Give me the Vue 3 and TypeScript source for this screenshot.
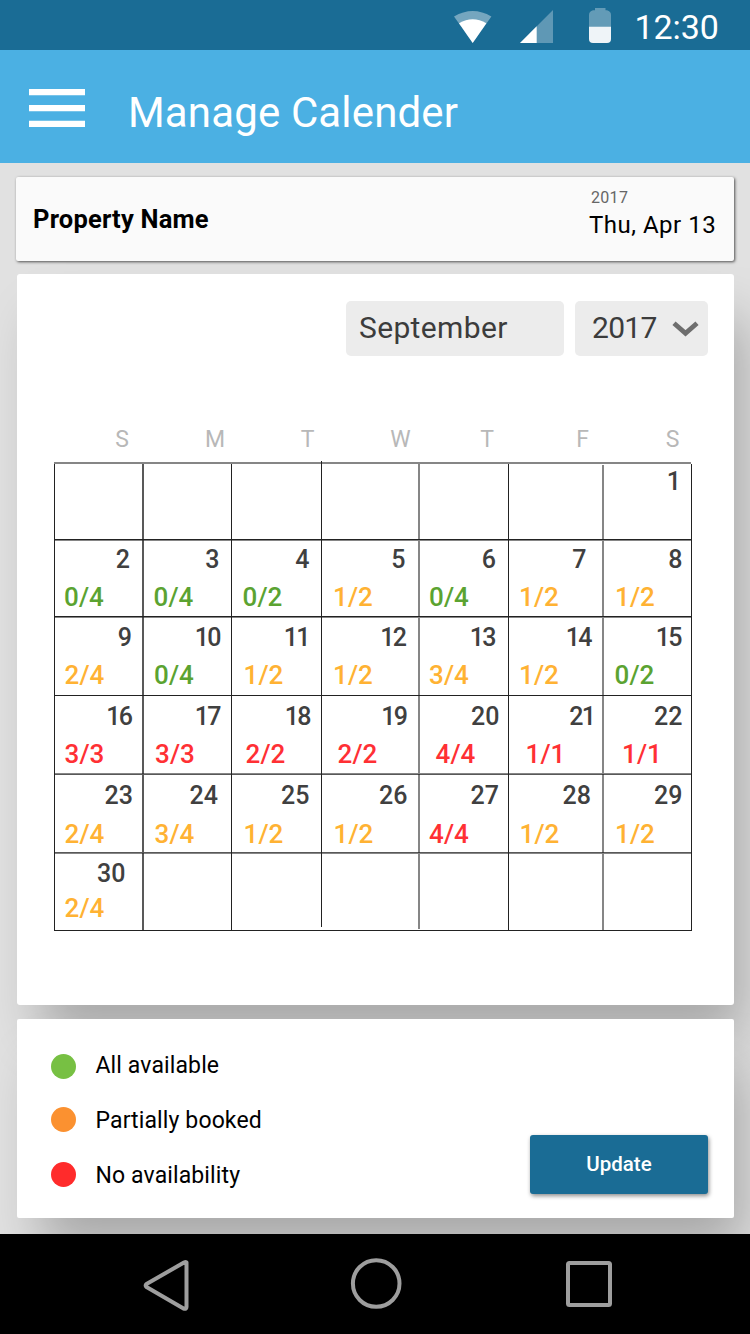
<script setup lang="ts">
type Status = 'free' | 'partial' | 'full'

interface Day {
  day: number
  // distance of the number from the right side of its cell
  inset: number
  booked?: string
  status?: Status
  // distance of the count from the left side of its cell
  lead?: number
}

type Week = { key: string; days: (Day | null)[] }

const d = (day: number, inset: number, booked?: string, status?: Status, lead?: number): Day => ({
  day, inset, booked, status, lead,
})

// a "1" is drawn closer to its neighbour than other digits
const hasOne = (day: number): boolean => day > 9 && String(day).includes('1')

const weekdays: string[] = ['S', 'M', 'T', 'W', 'T', 'F', 'S']

const weeks: Week[] = [
  { key: 'w0', days: [null, null, null, null, null, null, d(1, 10)] },
  { key: 'w1', days: [
    d(2, 13, '0/4', 'free', 10), d(3, 11.5, '0/4', 'free', 10.5), d(4, 11.5, '0/2', 'free', 11.5),
    d(5, 12.5, '1/2', 'partial', 12), d(6, 12, '0/4', 'free', 11), d(7, 16.5, '1/2', 'partial', 11), d(8, 8.5, '1/2', 'partial', 12),
  ] },
  { key: 'w2', days: [
    d(9, 11, '2/4', 'partial', 10.5), d(10, 9.5, '0/4', 'free', 11), d(11, 10.5, '1/2', 'partial', 12.5),
    d(12, 11, '1/2', 'partial', 12), d(13, 11.5, '3/4', 'partial', 11), d(14, 10.5, '1/2', 'partial', 11), d(15, 8.5, '0/2', 'free', 11.5),
  ] },
  { key: 'w3', days: [
    d(16, 10, '3/3', 'full', 10.5), d(17, 9.5, '3/3', 'full', 12), d(18, 9.5, '2/2', 'full', 14.5),
    d(19, 10, '2/2', 'full', 16.5), d(20, 8.5, '4/4', 'full', 17.5), d(21, 7, '1/1', 'full', 17.5), d(22, 8.5, '1/1', 'full', 19),
  ] },
  { key: 'w4', days: [
    d(23, 10, '2/4', 'partial', 10.5), d(24, 13, '3/4', 'partial', 11.5), d(25, 11.5, '1/2', 'partial', 12.5),
    d(26, 10.5, '1/2', 'partial', 12.5), d(27, 9, '4/4', 'full', 11), d(28, 12, '1/2', 'partial', 11.5), d(29, 8.5, '1/2', 'partial', 12),
  ] },
  { key: 'w5', days: [d(30, 17.5, '2/4', 'partial', 10.5), null, null, null, null, null, null] },
]

const legend: { status: Status; label: string }[] = [
  { status: 'free', label: 'All available' },
  { status: 'partial', label: 'Partially booked' },
  { status: 'full', label: 'No availability' },
]
</script>

<template>
  <div class="screen">
    <div class="statusbar">
      <svg class="indicators" width="160" height="50" viewBox="0 0 160 50">
        <path d="M4 16.500 Q22.700 5.500 41.400 16.500 L22.700 42.700Z" fill="#fff" opacity=".4" />
        <path d="M9 23.300 Q22.700 15 36.400 23.300 L22.700 42.900Z" fill="#fff" />
        <path d="M103 10V43H70Z" fill="#fff" opacity=".3" />
        <path d="M86.700 26.300V43H70Z" fill="#fff" />
        <path d="M145 8H155.500V10.300H157Q161 11.500 161 15V27H139V15Q139 11.500 143 10.300H145Z" fill="#fff" opacity=".32" />
        <path d="M139 26.700H161V39Q161 43 157 43H143Q139 43 139 39Z" fill="#eff4f8" />
      </svg>
      <span class="clock">12:30</span>
    </div>

    <header class="appbar">
      <svg class="burger" width="56" height="38" viewBox="0 0 56 38">
        <path d="M0 0H56V6.300H0ZM0 16H56V22.200H0ZM0 31.700H56V38H0Z" fill="#fff" />
      </svg>
      <h1>Manage Calender</h1>
    </header>

    <main class="content">
      <section class="property">
        <span class="name">Property Name</span>
        <div class="today">
          <span class="year">2017</span>
          <span class="date">Thu, Apr 13</span>
        </div>
      </section>

      <section class="calendar">
        <div class="pickers">
          <div class="picker month">September</div>
          <div class="picker yr">
            <span>2017</span>
            <svg width="27" height="16" viewBox="0 0 27 16">
              <path d="M2 2.300 L13.500 12.300 L25 2.300" fill="none" stroke="#6e6e6e" stroke-width="4.800" />
            </svg>
          </div>
        </div>
        <div class="weekdays">
          <span v-for="(w, i) in weekdays" :key="i">{{ w }}</span>
        </div>
        <div class="grid">
          <svg class="rules" width="640" height="472" viewBox="0 0 640 472">
            <g fill="#222">
              <path d="M1 3h1v467h-1ZM178 3h1v467h-1ZM268 0h1v466h-1ZM455 3h1v467h-1ZM638 3h1v467h-1Z" />
              <path d="M1 234h638v1H1ZM1 469h638v1H1ZM1 78h638v1H1ZM1 155h638v1H1Z" />
            </g>
            <g fill="#222" opacity=".75">
              <path d="M89 3h2v467h-2ZM1 313h638v1H1ZM1 391h638v1H1Z" />
            </g>
            <g fill="#222" opacity=".55">
              <path d="M1 1h637v2H1ZM365 2h2v466h-2ZM549 4h2v466h-2ZM1 79h638v1H1ZM1 156h638v1H1ZM1 312h638v1H1ZM1 392h638v1H1Z" />
            </g>
          </svg>
          <template v-for="week in weeks" :key="week.key">
            <div v-for="(cell, i) in week.days" :key="i" class="cell" :class="week.key">
              <template v-if="cell">
                <span class="day" :class="{ tight: hasOne(cell.day) }" :style="{ marginRight: cell.inset + 'px' }">{{ cell.day }}</span>
                <span v-if="cell.booked" class="count" :class="cell.status" :style="{ marginLeft: cell.lead + 'px' }">{{ cell.booked }}</span>
              </template>
            </div>
          </template>
        </div>
      </section>

      <section class="footer">
        <ul>
          <li v-for="item in legend" :key="item.status">
            <i class="dot" :class="item.status"></i>
            <span>{{ item.label }}</span>
          </li>
        </ul>
        <button type="button">Update</button>
      </section>
    </main>

    <nav class="navbar">
      <svg width="750" height="100" viewBox="0 0 750 100" fill="none" stroke="#9e9e9e" stroke-width="4" stroke-linejoin="round">
        <path d="M186.500 28.500 Q186 27.500 184 28.500 L146.500 50 Q145 51.500 146.500 53 L183.500 74.500 Q186.500 75.500 186.500 73Z" />
        <circle cx="376.200" cy="49.500" r="23.300" />
        <rect x="568" y="29" width="42" height="42" rx="1.500" />
      </svg>
    </nav>
  </div>
</template>

<style>
body {
  margin: 0;
}
</style>

<style scoped>
.screen {
  width: 750px;
  height: 1334px;
  overflow: hidden;
  display: flex;
  flex-direction: column;
  background: #e1e1e1;
  font-family: Roboto, "Liberation Sans", sans-serif;
  color: #000;
}
.statusbar {
  height: 50px;
  background: #1a6c95;
  display: flex;
  padding-left: 450px;
}
.indicators {
  overflow: visible;
  flex: none;
}
.clock {
  margin-left: 24.5px;
  font-size: 34px;
  line-height: 54px;
  letter-spacing: -.1px;
  color: #fff;
  white-space: nowrap;
}
.appbar {
  height: 113px;
  background: #4bb0e3;
  display: flex;
  align-items: flex-start;
}
.burger {
  margin: 39px 0 0 29px;
}
h1 {
  margin: 36px 0 0 43px;
  font-size: 42px;
  font-weight: 400;
  line-height: 54px;
  letter-spacing: .15px;
  color: #fff;
  white-space: nowrap;
}
.content {
  height: 1071px;
  box-sizing: border-box;
  padding: 14px 16px 0;
  overflow: hidden;
}
.property {
  position: relative;
  z-index: 1;
  height: 84px;
  border-radius: 2px;
  background: #fafafa;
  box-shadow: 1px 1px 3px rgba(0, 0, 0, .65);
  display: flex;
  justify-content: space-between;
}
.name {
  margin: 26px 0 0 17px;
  font-size: 25.5px;
  font-weight: 700;
  line-height: 32px;
  letter-spacing: .2px;
}
.today {
  width: 145px;
  display: flex;
  flex-direction: column;
  white-space: nowrap;
}
.year {
  margin: 11px 0 0 2px;
  font-size: 16px;
  line-height: 20px;
  letter-spacing: .3px;
  color: #666;
}
.date {
  margin-top: 2px;
  font-size: 24px;
  line-height: 30px;
  letter-spacing: .5px;
}
.calendar {
  margin: 13px 0 0 1px;
  height: 731px;
  border-radius: 3px;
  background: #fff;
  box-shadow: 17px 38px 50px -7px rgba(0, 0, 0, .26);
}
.pickers {
  display: flex;
  justify-content: flex-end;
  gap: 11px;
  padding: 27px 26px 0 0;
}
.picker {
  height: 55px;
  box-sizing: border-box;
  border-radius: 5px;
  background: #ececec;
  color: #3c3c3c;
  font-size: 30px;
  line-height: 53px;
}
.month {
  width: 218px;
  padding-left: 13px;
  letter-spacing: .35px;
}
.yr {
  width: 133px;
  padding: 0 9px 0 17px;
  display: flex;
  align-items: center;
  justify-content: space-between;
  letter-spacing: -.7px;
}
.yr span {
  margin-top: -2px;
}
.weekdays {
  margin: 69px 0 0 59px;
  width: 642px;
  display: grid;
  grid-template-columns: 92px 94px 91px 95px 78px 113px 67px;
  font-size: 23px;
  line-height: 30px;
  color: #b8b8b8;
  text-align: center;
}
.grid {
  position: relative;
  margin: 7px 0 0 37px;
  display: grid;
  grid-template-columns: 89px 88px 90px 97px 90px 95px 88px;
  grid-template-rows: 78px 77px 79px 78px 79px 78px;
}
.rules {
  position: absolute;
  left: -1px;
  top: -1px;
}
.cell {
  display: flex;
  flex-direction: column;
  padding-top: 8px;
}
.w2, .w3, .w5 { padding-top: 9px; }
.w4 { padding-top: 10px; }
.day {
  align-self: flex-end;
  font-size: 25px;
  font-weight: 500;
  line-height: 24px;
  color: #404040;
}
.day.tight {
  letter-spacing: -1.6px;
  padding-right: 1.6px;
}
.count {
  align-self: flex-start;
  margin-top: 12px;
  font-size: 26px;
  font-weight: 500;
  line-height: 26px;
  letter-spacing: .1px;
}
.w4 .count { margin-top: 13px; }
.w5 .count { margin-top: 9px; }
.count.free { color: #5ba331; }
.count.partial { color: #ffb233; }
.count.full { color: #ff3034; }
.footer {
  margin: 14px 0 0 1px;
  height: 199px;
  border-radius: 2px;
  background: #fff;
  position: relative;
  box-shadow: 17px 38px 50px -7px rgba(0, 0, 0, .26);
  display: flex;
  justify-content: space-between;
}
ul {
  list-style: none;
  margin: 32px 0 0 34px;
  padding: 0;
  display: flex;
  flex-direction: column;
  gap: 25px;
}
li {
  display: flex;
  align-items: center;
  gap: 19.5px;
  height: 30px;
  font-size: 23px;
  line-height: 30px;
  letter-spacing: .12px;
}
.dot {
  width: 25px;
  height: 25px;
  border-radius: 50%;
}
.dot.free { background: #77c043; margin-top: 1px; }
.dot.partial { background: #fb9130; margin-top: -3px; }
.dot.full { background: #ff2b2b; margin-top: -3px; }
button {
  margin: 116px 26px 0 0;
  width: 178px;
  height: 59px;
  padding: 0 0 2px;
  border: 0;
  border-radius: 3px;
  background: #1a6c95;
  box-shadow: 1px 2px 4px rgba(0, 0, 0, .45);
  font: 500 20.5px/56px Roboto, sans-serif;
  color: #fff;
}
.navbar {
  height: 100px;
  background: #000;
}
.navbar svg {
  display: block;
}
</style>
